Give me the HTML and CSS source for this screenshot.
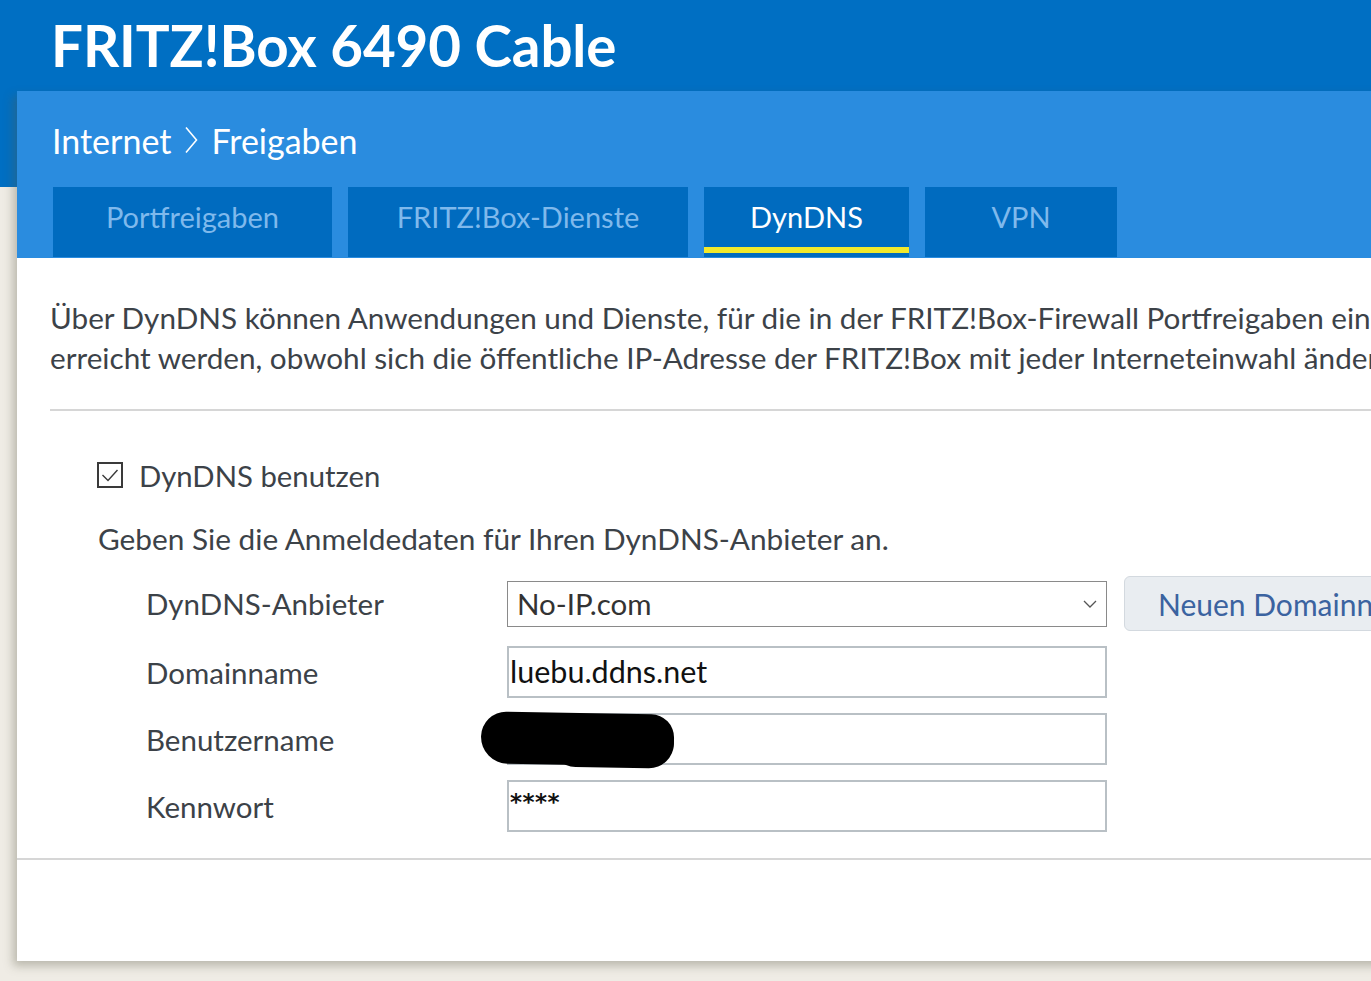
FILE: index.html
```html
<!DOCTYPE html>
<html lang="de">
<head>
<meta charset="utf-8">
<title>FRITZ!Box 6490 Cable</title>
<link rel="stylesheet" href="styles.css">
</head>
<body>
<header class="top">
  <h1 class="product">FRITZ!Box 6490 Cable</h1>
</header>
<main class="card">
  <div class="card-head">
    <div class="crumbs">
      <span>Internet</span>
      <svg class="chev" viewBox="0 0 14 28" aria-hidden="true"><path d="M2 1.5 L12.5 14 L2 26.5"/></svg>
      <span>Freigaben</span>
    </div>
    <nav class="tabs">
      <a class="tab">Portfreigaben</a>
      <a class="tab">FRITZ!Box-Dienste</a>
      <a class="tab active">DynDNS</a>
      <a class="tab">VPN</a>
    </nav>
  </div>
  <div class="card-body">
    <p class="intro">Über DynDNS können Anwendungen und Dienste, für die in der FRITZ!Box-Firewall Portfreigaben eingerichtet sind,<br>erreicht werden, obwohl sich die öffentliche IP-Adresse der FRITZ!Box mit jeder Interneteinwahl ändert.</p>
    <hr class="sep">
    <div class="section">
      <label class="check">
        <span class="box"><svg viewBox="0 0 22 22" aria-hidden="true"><path d="M3.5 11 L9 16.5 L18.5 6"/></svg></span>
        <span>DynDNS benutzen</span>
      </label>
      <p class="hint">Geben Sie die Anmeldedaten für Ihren DynDNS-Anbieter an.</p>
      <div class="form">
        <span class="lbl">DynDNS-Anbieter</span>
        <div class="select">
          <span>No-IP.com</span>
          <svg class="arrow" viewBox="0 0 14 8" aria-hidden="true"><path d="M1 1 L7 7 L13 1"/></svg>
        </div>
        <button class="btn">Neuen Domainnamen registrieren</button>

        <span class="lbl">Domainname</span>
        <div class="field">luebu.ddns.net</div>
        <span class="spacer"></span>

        <span class="lbl">Benutzername</span>
        <div class="field redacted"><span class="blob"></span></div>
        <span class="spacer"></span>

        <span class="lbl">Kennwort</span>
        <div class="field pw">****</div>
        <span class="spacer"></span>
      </div>
    </div>
    <hr class="sep foot-sep">
  </div>
</main>
</body>
</html>
```

FILE: styles.css
```css
html, body {
  margin: 0;
  padding: 0;
}

body {
  width: 1371px;
  height: 981px;
  overflow: hidden;
  background: linear-gradient(#006fc3 0, #006fc3 187px, #efece5 187px);
  font-family: "Lato", "Noto Sans", sans-serif;
  color: #3c4248;
}

.top {
  height: 91px;
  display: flex;
  align-items: center;
  padding-left: 51px;
}

.product {
  margin: 0;
  font-family: "Lato", sans-serif;
  font-weight: 700;
  font-size: 56.5px;
  line-height: 1;
  color: #ffffff;
  letter-spacing: -0.1px;
  padding-bottom: 0;
}

.card {
  display: block;
  margin-left: 17px;
  width: 1600px;
  background: #ffffff;
  box-shadow: -4px 5px 9px rgba(90, 88, 70, 0.35);
}

.card-head {
  background: #2a8cdf;
  padding-bottom: 1px;
}

.crumbs {
  height: 94px;
  padding-top: 2px;
  padding-left: 35px;
  display: flex;
  align-items: center;
  gap: 13px;
  color: #ffffff;
  font-size: 34px;
}

.chev {
  width: 14px;
  height: 28px;
  fill: none;
  stroke: #ffffff;
  stroke-width: 1.6;
}

.tabs {
  display: flex;
  gap: 16px;
  padding-left: 36px;
  height: 70px;
}

.tab {
  position: relative;
  display: flex;
  align-items: center;
  justify-content: center;
  box-sizing: border-box;
  padding: 0 0 12px;
  background: #006bbf;
  color: #7fb9ec;
  font-size: 29px;
  white-space: nowrap;
}

.tab:nth-child(1) { width: 279px; }
.tab:nth-child(2) { width: 340px; }
.tab:nth-child(3) { width: 205px; }
.tab:nth-child(4) { width: 192px; }

.tab.active {
  color: #ffffff;
}

.tab.active::after {
  content: "";
  position: absolute;
  left: 0;
  right: 0;
  bottom: 4px;
  height: 6px;
  background: #f2e92c;
}

.card-body {
  padding: 40px 0 101px 33px;
}

.intro {
  margin: 0;
  font-size: 29.7px;
  line-height: 40px;
  white-space: nowrap;
}

.sep {
  margin: 31px 0 0;
  border: 0;
  height: 2px;
  background: #d6d6d6;
}

.section {
  padding-left: 47px;
}

.check {
  margin-top: 44px;
  display: flex;
  align-items: center;
  height: 40px;
  font-size: 29.3px;
  gap: 16px;
}

.box {
  width: 26px;
  height: 26px;
  box-sizing: border-box;
  border: 2px solid #3a3a3a;
  display: flex;
  align-items: center;
  justify-content: center;
}

.box svg {
  width: 22px;
  height: 22px;
  fill: none;
  stroke: #3a3a3a;
  stroke-width: 1.4;
}

.hint {
  margin: 24px 0 0 1px;
  font-size: 29.8px;
  line-height: 40px;
  white-space: nowrap;
}

.form {
  margin-top: 17px;
  padding-left: 49px;
  display: grid;
  grid-template-columns: 344px 600px auto;
  column-gap: 17px;
  row-gap: 15px;
  align-items: center;
}

.lbl {
  font-size: 29.5px;
  white-space: nowrap;
  color: #3c4248;
}

.select {
  box-sizing: border-box;
  height: 46px;
  border: 1px solid #8a8a8a;
  display: flex;
  align-items: center;
  justify-content: space-between;
  padding: 0 9px 0 9px;
  font-size: 29.5px;
  color: #333333;
}

.arrow {
  width: 14px;
  height: 8px;
  fill: none;
  stroke: #555555;
  stroke-width: 1.3;
}

.btn {
  height: 55px;
  box-sizing: border-box;
  border: 1px solid #d3d9df;
  border-radius: 6px;
  background: #e9edf1;
  color: #3b63a0;
  font-family: "Lato", sans-serif;
  font-size: 30px;
  padding: 0 34px 0 33px;
  white-space: nowrap;
  text-align: left;
}

.field {
  position: relative;
  box-sizing: border-box;
  height: 52px;
  border: 2px solid #b9c0c5;
  display: flex;
  align-items: center;
  padding: 0 1px 2px;
  font-size: 30.5px;
  color: #111111;
}

.field.pw {
  align-items: flex-start;
  padding-top: 7px;
  font-family: "DejaVu Sans", sans-serif;
  font-weight: 700;
  font-size: 23px;
  letter-spacing: 0.5px;
  color: #111111;
}

.blob {
  position: absolute;
  left: -28px;
  top: -2px;
  width: 193px;
  height: 52px;
  background: #000000;
  border-radius: 26px 24px 26px 28px;
  transform: rotate(1deg);
}

.blob::after {
  content: "";
  position: absolute;
  left: 70px;
  top: 4px;
  width: 123px;
  height: 50px;
  background: #000000;
  border-radius: 25px;
}

.spacer {
  display: block;
}

.foot-sep {
  margin: 26px 0 0 -33px;
}
```
